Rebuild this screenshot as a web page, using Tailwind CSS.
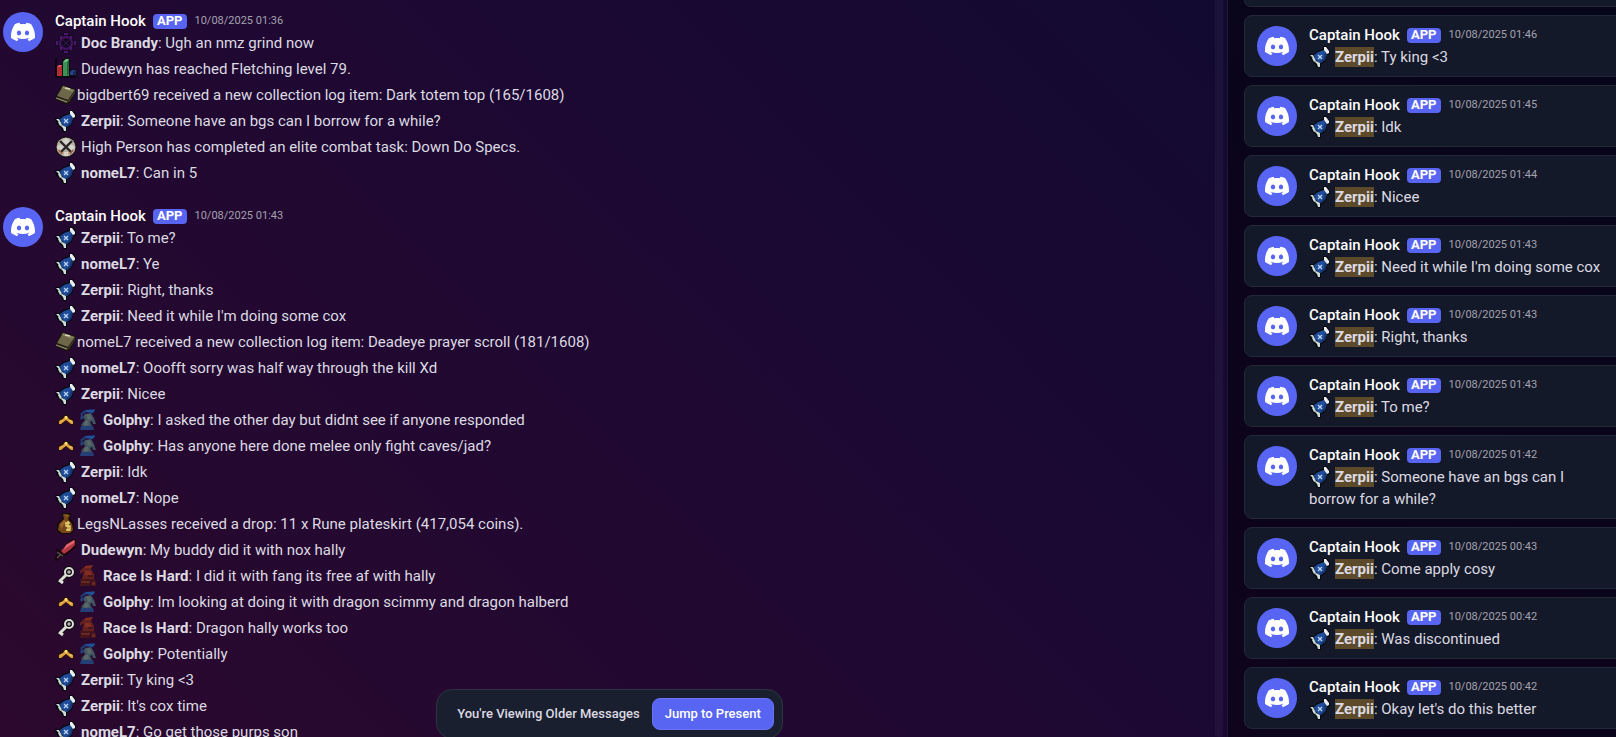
<!DOCTYPE html>
<html lang="en">
<head>
    <meta charset="UTF-8">
    <meta name="viewport" content="width=device-width, initial-scale=1.0">
    <title>Captain Hook</title>
    <script src="https://cdn.jsdelivr.net/npm/@tailwindcss/browser@4"></script>
</head>
<body class="h-screen overflow-hidden bg-[#180831] bg-linear-45 from-[#2c082e] via-[#1c0832] to-[#0c0a31] font-[Roboto,sans-serif] text-[#dcdae2]">

    <!-- icon sprites -->
    <svg class="hidden" aria-hidden="true">
        <symbol id="discord" viewBox="0 0 24 24">
            <path fill="#fff" d="M20.317 4.3698a19.7913 19.7913 0 00-4.8851-1.5152.0741.0741 0 00-.0785.0371c-.211.3753-.4447.8648-.6083 1.2495-1.8447-.2762-3.68-.2762-5.4868 0-.1636-.3933-.4058-.8742-.6177-1.2495a.077.077 0 00-.0785-.037 19.7363 19.7363 0 00-4.8852 1.515.0699.0699 0 00-.0321.0277C.5334 9.0458-.319 13.5799.0992 18.0578a.0824.0824 0 00.0312.0561c2.0528 1.5076 4.0413 2.4228 5.9929 3.0294a.0777.0777 0 00.0842-.0276c.4616-.6304.8731-1.2952 1.226-1.9942a.076.076 0 00-.0416-.1057c-.6528-.2476-1.2743-.5495-1.8722-.8923a.077.077 0 01-.0076-.1277c.1258-.0943.2517-.1923.3718-.2914a.0743.0743 0 01.0776-.0105c3.9278 1.7933 8.18 1.7933 12.0614 0a.0739.0739 0 01.0785.0095c.1202.099.246.1981.3728.2924a.077.077 0 01-.0066.1276 12.2986 12.2986 0 01-1.873.8914.0766.0766 0 00-.0407.1067c.3604.698.7719 1.3628 1.225 1.9932a.076.076 0 00.0842.0286c1.961-.6067 3.9495-1.5219 6.0023-3.0294a.077.077 0 00.0313-.0552c.5004-5.177-.8382-9.6739-3.5485-13.6604a.061.061 0 00-.0312-.0286zM8.02 15.3312c-1.1825 0-2.1569-1.0857-2.1569-2.419 0-1.3332.9555-2.4189 2.157-2.4189 1.2108 0 2.1757 1.0952 2.1568 2.419 0 1.3332-.9555 2.4189-2.1569 2.4189zm7.9748 0c-1.1825 0-2.1569-1.0857-2.1569-2.419 0-1.3332.9554-2.4189 2.1569-2.4189 1.2108 0 2.1757 1.0952 2.1568 2.419 0 1.3332-.946 2.4189-2.1568 2.4189Z"/>
        </symbol>
        <symbol id="hat" viewBox="0 0 22 22">
            <path fill="#07080f" d="M0 8h5l3-3 6-2V0h4l3 5v3l-3 1-1 6-5 3v4H8l-2-4-5-5z"/>
            <path fill="#1f4c98" d="M5 9l4-3 6-2 3 4-2 6-4 3-3-1-3-3z"/>
            <path fill="#163670" d="M16 6l2 2-2 6-4 3-1-1 4-4z"/>
            <path fill="#e9eeee" d="M15 1h2l3 4v2l-2 1-3-4z"/>
            <path fill="#cddcd8" d="M1 9h3l1 2-1 1zM3 12l2-1 2 4-2 1zM6 16l1-1 4 2v4H9l-1-3z"/>
            <path fill="none" stroke="#bfd6fb" stroke-width="1.2" d="M9 9l4 4M13 9l-4 4"/>
        </symbol>
        <symbol id="wheel" viewBox="0 0 22 22">
            <path fill="#150a24" d="M8 0h6v3h4v5h4v6h-4v4h-4v4H8v-4H4v-4H0V8h4V3h4z"/>
            <circle cx="11" cy="11" r="6" fill="none" stroke="#401260" stroke-width="2.4"/>
            <path fill="#4b186c" d="M9 1h4v2H9zM9 19h4v2H9zM1 9h2v4H1zM19 9h2v4h-2zM5 4h2v3H5zM15 4h2v3h-2zM5 15h2v3H5zM15 15h2v3h-2z"/>
            <path stroke="#2e184b" d="M8 8l6 6M14 8l-6 6"/>
        </symbol>
        <symbol id="stats" viewBox="0 0 22 22">
            <path fill="none" stroke="#090611" stroke-width="1.6" d="M1 0v19h20"/>
            <path fill="#120d13" d="M7 3l3-3h5v19H7zM14 13l3-2h5v7h-8z"/>
            <path fill="#b42e30" d="M2 9l2-2h3v11H2z"/><path fill="#de6060" d="M2 9l2-2h3l-2 2z"/>
            <path fill="#3c9358" d="M8 4l3-3h3v17H8z"/><path fill="#69c580" d="M8 4l3-3h3l-2 3z"/><path fill="#29663f" d="M12 4l2-3v15l-2 2z"/>
            <path fill="#25418c" d="M15 14l2-2h4v5h-6z"/><path fill="#182b5d" d="M18 14l3-2v5h-3z"/>
        </symbol>
        <symbol id="book" viewBox="0 0 22 22">
            <path fill="#17140e" d="M7 1l14 4v3l-6 11-4 1-10-4v-4z"/>
            <path fill="#6d6648" d="M8 2l12 4-7 10-11-4z"/>
            <path fill="#857e60" d="M8 2l11 4-2 2L7 4z"/>
            <path fill="#403a26" d="M1 13l12 4 7-10v2l-6 9-3 1-9-4z"/>
            <path fill="none" stroke="#9d947a" d="M1 14l11 4"/>
            <path stroke="#d8d4bb" stroke-width="1.4" d="M10 4l5 1"/>
        </symbol>
        <symbol id="swords" viewBox="0 0 22 22">
            <circle cx="11" cy="11" r="10.5" fill="#11100f"/>
            <circle cx="11" cy="11" r="9.5" fill="#b8b1a6"/>
            <path fill="#d4d2cc" d="M11 2l4 3-4 4-4-4zM2 11l4-3 3 3-4 4zM20 11l-4-3-3 3 4 4z"/>
            <path stroke="#292827" stroke-width="2.4" d="M5 5l11 11M17 5L6 16"/>
            <path stroke="#a55931" stroke-width="1.6" d="M4 14l3 4M18 14l-3 4"/>
            <path fill="#ded0c1" d="M9 16h4v4H9z"/>
        </symbol>
        <symbol id="crown" viewBox="0 0 22 22">
            <path fill="#24120e" d="M9 6h4l6 5v5h-3l-5-4-5 4H3v-5z"/>
            <path fill="#e0a040" d="M10 7h2l2 3 4 2v3h-2l-5-4-5 4H4v-3l4-2z"/>
            <path fill="#ffe07c" d="M10 7h2v3h-2zM5 12l3-1-1 1zM14 11l3 1-1 1z"/>
        </symbol>
        <symbol id="knight" viewBox="0 0 22 22">
            <path fill="#213a73" d="M3 5l5-4 10-1-2 4-6-1-5 3v2z"/>
            <path fill="#1d529b" d="M9 1h9l-2 3-7-1z"/>
            <path fill="#405461" d="M8 5l6-1 3 5 2 6h-3l-1-3-2 1 2 4H6l-2-1 4-5-2-3z"/>
            <path fill="#596866" d="M9 6l4-1 2 5-4 1zM7 13l4-2 1 5-5 1z"/>
            <path fill="#243f76" d="M4 17h12l1 4H3zM3 8l3-2 1 3-3 2z"/>
        </symbol>
        <symbol id="redhelm" viewBox="0 0 22 22">
            <path fill="#65211f" d="M3 6l4-4 9-2-2 4 3 5v5H5l2-8-4 3z"/>
            <path fill="#822c22" d="M8 1l8-1-3 3H8zM8 6h5l2 4H8z"/>
            <path fill="#45151d" d="M3 14h15v2H3zM3 18h10v3H3zM14 16h5v5h-5zM11 10h5v2h-5z"/>
            <path fill="#692820" d="M15 17h3v3h-3zM4 16h9v2H4z"/>
        </symbol>
        <symbol id="bag" viewBox="0 0 22 22">
            <path fill="#120c08" d="M7 0h9l-1 5 4 5v7l-3 4H6l-4-3v-7l6-6z"/>
            <path fill="#754718" d="M8 1l7 1-2 4 4 5 1 6-3 3H7l-4-3 1-6 5-5z"/>
            <path fill="#986429" d="M5 11l4-4 3 2-3 3-3 4zM9 1l5 1-2 2z"/>
            <path fill="none" stroke="#ead475" stroke-width="1.4" d="M15 10h-4v3h4v4h-4M13 8v10"/>
        </symbol>
        <symbol id="blade" viewBox="0 0 22 22">
            <path fill="#17070b" d="M18 0h3v8l-6 5-6 4-4 1-3 4H0v-4l3-3-3-2 2-3 4 2 5-7z"/>
            <path fill="#ae3544" d="M20 1v5l-5 5-6 4-3-3 6-7z"/>
            <path fill="#e0646b" d="M19 1v3l-8 5-3 3 3-6z"/>
            <path fill="none" stroke="#5e5553" stroke-width="1.4" d="M2 13l6 4M2 19l4-4"/>
        </symbol>
        <symbol id="key" viewBox="0 0 22 22">
            <g fill="none" stroke="#0a090c" stroke-width="4"><circle cx="14" cy="7" r="4"/><path d="M11 10l-6 6M4 15l3 3"/></g>
            <g fill="none" stroke="#dddfd6" stroke-width="2"><circle cx="14" cy="7" r="4"/><path stroke-width="3" d="M11 10l-6 6M4 15l4 3"/></g>
            <path stroke="#dddfd6" d="M14 5v4M12 7h4"/>
        </symbol>
    </svg>

    <div class="flex h-full">
        <main class="relative flex min-w-0 flex-1">
            <div id="chat" class="min-w-0 flex-1 overflow-hidden pt-2 pl-[3px]"></div>
            <div class="mr-1 w-2 rounded-b bg-white/4"></div>

            <div class="absolute inset-x-0 -bottom-0.5 flex justify-center pr-2">
                <div class="flex items-center gap-3 rounded-2xl border border-[#2d3440] bg-[#1a1f30] py-2 pr-2 pl-5 text-[13px] font-medium">
                    <span>You're Viewing Older Messages</span>
                    <button type="button" class="h-8 rounded-lg border border-[#6873f5] bg-[#5865f2] px-3 text-white hover:bg-[#4752c4]">Jump to Present</button>
                </div>
            </div>
        </main>

        <aside class="w-[389px] overflow-hidden border-l border-[#1c1830] bg-black/45">
            <div class="-mr-2 ml-4 h-[7px] rounded-b-lg border-b border-l border-[#222835] bg-[#141929]"></div>
            <div id="results" class="mt-2 -mr-2 ml-4 flex flex-col gap-2"></div>
        </aside>
    </div>

    <script>
        // [icons, name, text]
        const chat = [
            { time: '10/08/2025 01:36', rows: [
                [['wheel'], 'Doc Brandy', 'Ugh an nmz grind now'],
                [['stats'], '', 'Dudewyn has reached Fletching level 79.'],
                [['book'], null, 'bigdbert69 received a new collection log item: Dark totem top (165/1608)'],
                [['hat'], 'Zerpii', 'Someone have an bgs can I borrow for a while?'],
                [['swords'], '', 'High Person has completed an elite combat task: Down Do Specs.'],
                [['hat'], 'nomeL7', 'Can in 5'],
            ]},
            { time: '10/08/2025 01:43', rows: [
                [['hat'], 'Zerpii', 'To me?'],
                [['hat'], 'nomeL7', 'Ye'],
                [['hat'], 'Zerpii', 'Right, thanks'],
                [['hat'], 'Zerpii', "Need it while I'm doing some cox"],
                [['book'], null, 'nomeL7 received a new collection log item: Deadeye prayer scroll (181/1608)'],
                [['hat'], 'nomeL7', 'Ooofft sorry was half way through the kill Xd'],
                [['hat'], 'Zerpii', 'Nicee'],
                [['crown', 'knight'], 'Golphy', 'I asked the other day but didnt see if anyone responded'],
                [['crown', 'knight'], 'Golphy', 'Has anyone here done melee only fight caves/jad?'],
                [['hat'], 'Zerpii', 'Idk'],
                [['hat'], 'nomeL7', 'Nope'],
                [['bag'], null, 'LegsNLasses received a drop: 11 x Rune plateskirt (417,054 coins).'],
                [['blade'], 'Dudewyn', 'My buddy did it with nox hally'],
                [['key', 'redhelm'], 'Race Is Hard', 'I did it with fang its free af with hally'],
                [['crown', 'knight'], 'Golphy', 'Im looking at doing it with dragon scimmy and dragon halberd'],
                [['key', 'redhelm'], 'Race Is Hard', 'Dragon hally works too'],
                [['crown', 'knight'], 'Golphy', 'Potentially'],
                [['hat'], 'Zerpii', 'Ty king &lt;3'],
                [['hat'], 'Zerpii', "It's cox time"],
                [['hat'], 'nomeL7', 'Go get those purps son'],
            ]},
        ];

        const results = [
            ['01:46', 'Ty king &lt;3'],
            ['01:45', 'Idk'],
            ['01:44', 'Nicee'],
            ['01:43', "Need it while I'm doing some cox"],
            ['01:43', 'Right, thanks'],
            ['01:43', 'To me?'],
            ['01:42', 'Someone have an bgs can I borrow for a while?'],
            ['00:43', 'Come apply cosy'],
            ['00:42', 'Was discontinued'],
            ['00:42', "Okay let's do this better"],
        ];

        const avatar = `<div class="mt-0.5 flex size-10 shrink-0 items-center justify-center rounded-full bg-[#5865f2]"><svg class="size-6"><use href="#discord"/></svg></div>`;

        const header = (time) => `
            <div class="flex h-[22px] items-center whitespace-nowrap">
                <span class="min-w-[93px] text-[15px] font-medium text-white">Captain Hook</span>
                <span class="ml-[5px] flex h-[15px] items-center rounded bg-[#5865f2] px-1 text-[13px] font-bold text-white">APP</span>
                <time class="ml-2 text-[11px] text-[#a5a2b0]">${time}</time>
            </div>`;

        const line = ([icons, name, text], mark) => {
            const svgs = icons.map((id) => `<svg class="inline size-[22px] align-bottom"><use href="#${id}"/></svg>`).join('');
            const gap = name === null ? '' : '<span class="inline-block w-1"></span>';
            const who = name ? `<strong class="font-bold ${mark ? 'bg-[#5c4a2b] py-px' : ''}">${name}</strong>: ` : '';
            return svgs + gap + who + text;
        };

        document.getElementById('chat').innerHTML = chat.map((group) => `
            <section class="mb-[17px] flex gap-3 pt-0.5">
                ${avatar}
                <div class="min-w-0">
                    ${header(group.time)}
                    <div class="flex flex-col gap-1 pb-0.5">
                        ${group.rows.map((row) => `<p class="text-[15px] leading-[22px]">${line(row, false)}</p>`).join('')}
                    </div>
                </div>
            </section>`).join('');

        document.getElementById('results').innerHTML = results.map(([time, text]) => `
            <article class="flex gap-3 rounded-lg border border-[#222835] bg-[#141929] px-3 py-2">
                ${avatar}
                <div class="min-w-0">
                    ${header('10/08/2025 ' + time)}
                    <p class="text-[15px] leading-[22px]">${line([['hat'], 'Zerpii', text], true)}</p>
                </div>
            </article>`).join('');
    </script>

</body>
</html>
